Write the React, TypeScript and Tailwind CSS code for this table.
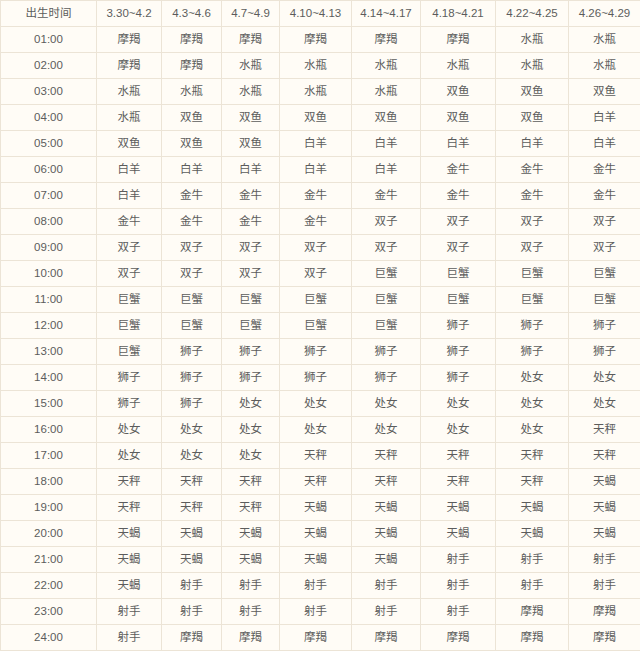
const HEADERS = [
  "出生时间",
  "3.30~4.2",
  "4.3~4.6",
  "4.7~4.9",
  "4.10~4.13",
  "4.14~4.17",
  "4.18~4.21",
  "4.22~4.25",
  "4.26~4.29",
];

const COL_WIDTHS = ["w-[96px]", "w-[65px]", "w-[60px]", "w-[58px]", "w-[72px]", "w-[69px]", "w-[75px]", "w-[73px]", "w-[72px]"];

const ROWS: string[][] = [
  ["01:00", "摩羯", "摩羯", "摩羯", "摩羯", "摩羯", "摩羯", "水瓶", "水瓶"],
  ["02:00", "摩羯", "摩羯", "水瓶", "水瓶", "水瓶", "水瓶", "水瓶", "水瓶"],
  ["03:00", "水瓶", "水瓶", "水瓶", "水瓶", "水瓶", "双鱼", "双鱼", "双鱼"],
  ["04:00", "水瓶", "双鱼", "双鱼", "双鱼", "双鱼", "双鱼", "双鱼", "白羊"],
  ["05:00", "双鱼", "双鱼", "双鱼", "白羊", "白羊", "白羊", "白羊", "白羊"],
  ["06:00", "白羊", "白羊", "白羊", "白羊", "白羊", "金牛", "金牛", "金牛"],
  ["07:00", "白羊", "金牛", "金牛", "金牛", "金牛", "金牛", "金牛", "金牛"],
  ["08:00", "金牛", "金牛", "金牛", "金牛", "双子", "双子", "双子", "双子"],
  ["09:00", "双子", "双子", "双子", "双子", "双子", "双子", "双子", "双子"],
  ["10:00", "双子", "双子", "双子", "双子", "巨蟹", "巨蟹", "巨蟹", "巨蟹"],
  ["11:00", "巨蟹", "巨蟹", "巨蟹", "巨蟹", "巨蟹", "巨蟹", "巨蟹", "巨蟹"],
  ["12:00", "巨蟹", "巨蟹", "巨蟹", "巨蟹", "巨蟹", "狮子", "狮子", "狮子"],
  ["13:00", "巨蟹", "狮子", "狮子", "狮子", "狮子", "狮子", "狮子", "狮子"],
  ["14:00", "狮子", "狮子", "狮子", "狮子", "狮子", "狮子", "处女", "处女"],
  ["15:00", "狮子", "狮子", "处女", "处女", "处女", "处女", "处女", "处女"],
  ["16:00", "处女", "处女", "处女", "处女", "处女", "处女", "处女", "天秤"],
  ["17:00", "处女", "处女", "处女", "天秤", "天秤", "天秤", "天秤", "天秤"],
  ["18:00", "天秤", "天秤", "天秤", "天秤", "天秤", "天秤", "天秤", "天蝎"],
  ["19:00", "天秤", "天秤", "天秤", "天蝎", "天蝎", "天蝎", "天蝎", "天蝎"],
  ["20:00", "天蝎", "天蝎", "天蝎", "天蝎", "天蝎", "天蝎", "天蝎", "天蝎"],
  ["21:00", "天蝎", "天蝎", "天蝎", "天蝎", "天蝎", "射手", "射手", "射手"],
  ["22:00", "天蝎", "射手", "射手", "射手", "射手", "射手", "射手", "射手"],
  ["23:00", "射手", "射手", "射手", "射手", "射手", "射手", "摩羯", "摩羯"],
  ["24:00", "射手", "摩羯", "摩羯", "摩羯", "摩羯", "摩羯", "摩羯", "摩羯"],
];

const cell = "h-[26px] p-0 border border-[#ece4d6] text-center align-middle leading-none";

export default function App() {
  return (
    <div className="w-[640px] h-[651px] overflow-hidden bg-[#fffcf6] font-['Liberation_Sans','Noto_Sans_CJK_SC',sans-serif] text-[11.5px] text-[#5c5c5c]">
      <table className="w-[640px] table-fixed border-collapse">
        <colgroup>
          {COL_WIDTHS.map((w, i) => (
            <col key={i} className={w} />
          ))}
        </colgroup>
        <thead>
          <tr>
            {HEADERS.map((h) => (
              <th key={h} className={cell + " font-normal"}>
                {h}
              </th>
            ))}
          </tr>
        </thead>
        <tbody>
          {ROWS.map((row) => (
            <tr key={row[0]}>
              {row.map((v, i) => (
                <td key={i} className={cell}>
                  {v}
                </td>
              ))}
            </tr>
          ))}
        </tbody>
      </table>
    </div>
  );
}
